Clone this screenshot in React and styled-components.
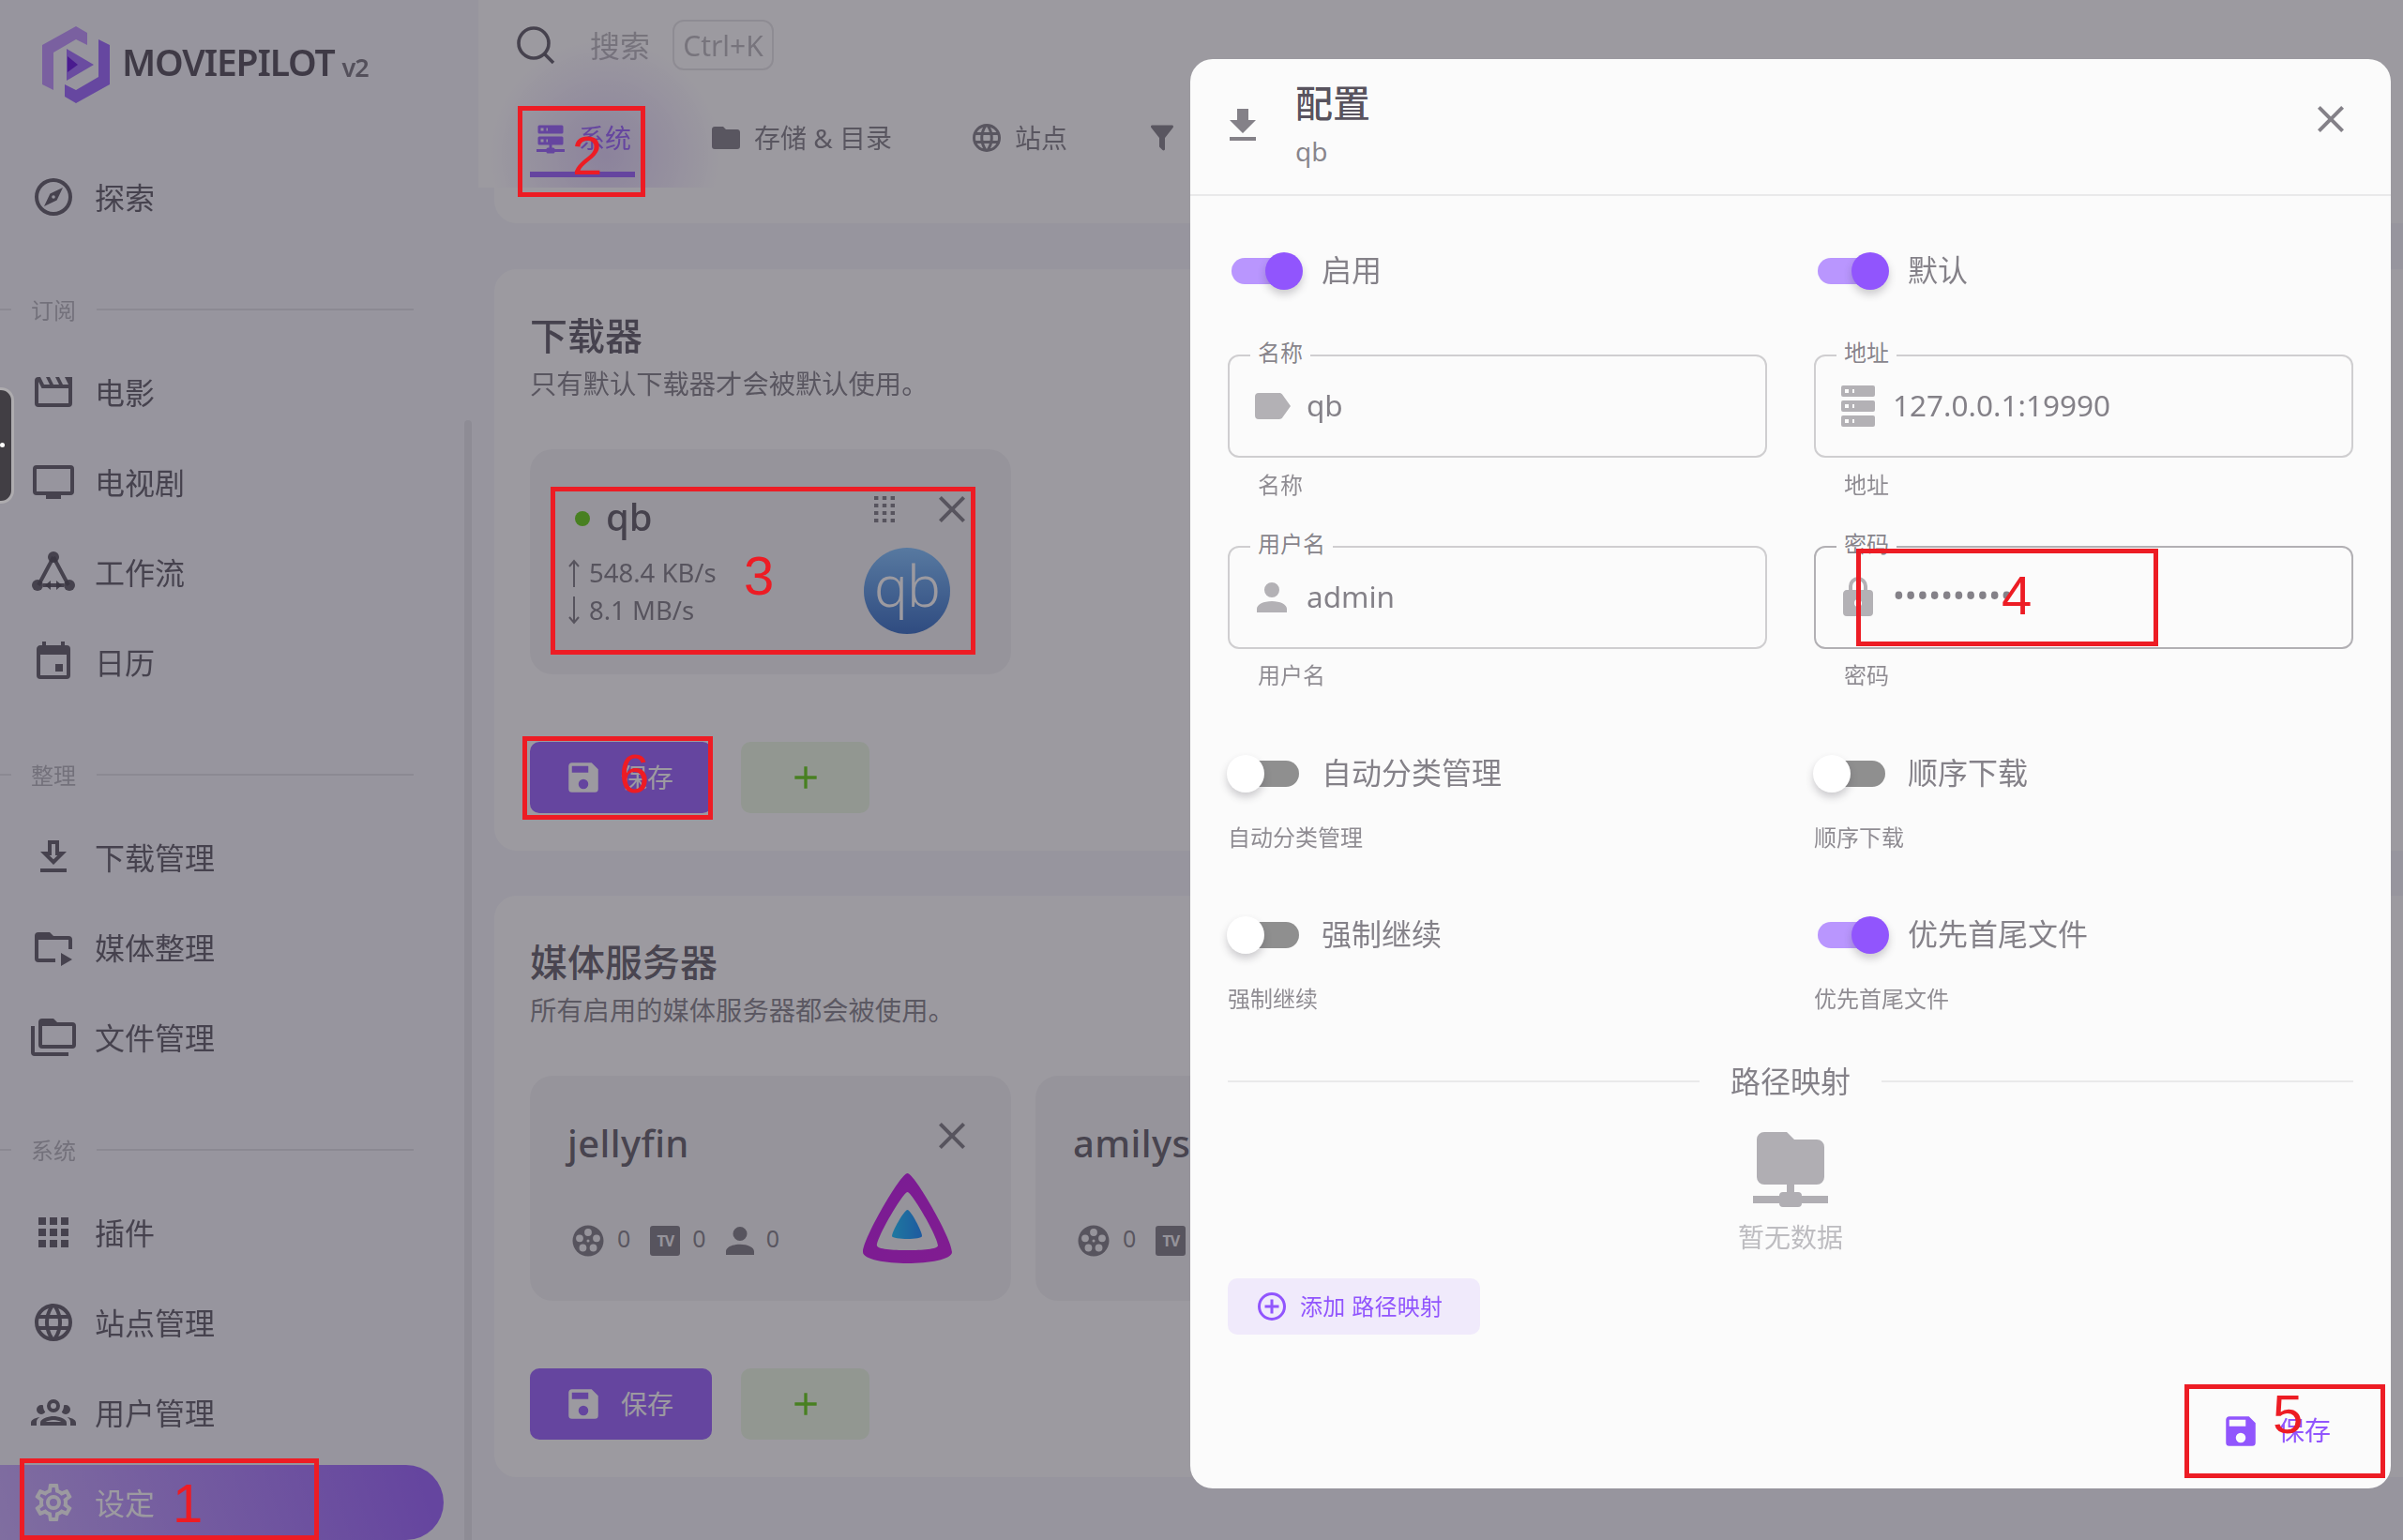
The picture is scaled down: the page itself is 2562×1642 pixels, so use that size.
import React from "react";
import styled, { createGlobalStyle } from "styled-components";

const FONT = `"Noto Sans", "Noto Sans CJK SC", sans-serif`;
const PRIMARY = "#9155fd";
const INK = "rgba(58,53,65,.87)";
const INK_MID = "rgba(58,53,65,.68)";
const INK_FAINT = "rgba(58,53,65,.38)";
const SOFT = "blur(0.55px)";

const Global = createGlobalStyle`
  html, body { margin: 0; padding: 0; background: #f4f5fa; }
  * { box-sizing: border-box; }
  body { font-family: ${FONT}; }
`;

const P = {
  compass: "M7,17L10.2,10.2L17,7L13.8,13.8L7,17M12,11.1A0.9,0.9 0 0,0 11.1,12A0.9,0.9 0 0,0 12,12.9A0.9,0.9 0 0,0 12.9,12A0.9,0.9 0 0,0 12,11.1M12,2A10,10 0 0,1 22,12A10,10 0 0,1 12,22A10,10 0 0,1 2,12A10,10 0 0,1 12,2M12,4A8,8 0 0,0 4,12A8,8 0 0,0 12,20A8,8 0 0,0 20,12A8,8 0 0,0 12,4Z",
  movie: "M5.76,10H20V18H4V6.47M22,4H18L20,8H17L15,4H13L15,8H12L10,4H8L10,8H7L5,4H4A2,2 0 0,0 2,6V18A2,2 0 0,0 4,20H20A2,2 0 0,0 22,18V4Z",
  tv: "M21,17H3V5H21M21,3H3A2,2 0 0,0 1,5V17A2,2 0 0,0 3,19H8V21H16V19H21A2,2 0 0,0 23,17V5A2,2 0 0,0 21,3Z",
  calendar: "M19,19H5V8H19M19,3H18V1H16V3H8V1H6V3H5C3.89,3 3,3.89 3,5V19A2,2 0 0,0 5,21H19A2,2 0 0,0 21,19V5A2,2 0 0,0 19,3M13,13H17V17H13",
  downloadOutline: "M13,5V11H14.17L12,13.17L9.83,11H11V5H13M15,3H9V9H5L12,16L19,9H15V3M19,18H5V20H19V18Z",
  download: "M5,20H19V18H5M19,9H15V3H9V9H5L12,16L19,9Z",
  folderPlay: "M22,13V8A2,2 0 0 0 20,6H12L10,4H4A2,2 0 0,0 2,6V18A2,2 0 0,0 4,20H13V18H4V8H20V13H22M16,15V22L22,18.5L16,15Z",
  folderMulti: "M22,4H14L12,2H6A2,2 0 0,0 4,4V16A2,2 0 0,0 6,18H22A2,2 0 0,0 24,16V6A2,2 0 0,0 22,4M2,6H0V20A2,2 0 0,0 2,22H20V20H2V6M22,16H6V6H22V16Z",
  apps: "M16,20H20V16H16M16,14H20V10H16M10,8H14V4H10M16,8H20V4H16M10,14H14V10H10M4,14H8V10H4M4,20H8V16H4M10,20H14V16H10M4,8H8V4H4V8Z",
  web: "M16.36,14C16.44,13.34 16.5,12.68 16.5,12C16.5,11.32 16.44,10.66 16.36,10H19.74C19.9,10.64 20,11.31 20,12C20,12.69 19.9,13.36 19.74,14M14.59,19.56C15.19,18.45 15.65,17.25 15.97,16H18.92C17.96,17.65 16.43,18.93 14.59,19.56M14.34,14H9.66C9.56,13.34 9.5,12.68 9.5,12C9.5,11.32 9.56,10.65 9.66,10H14.34C14.43,10.65 14.5,11.32 14.5,12C14.5,12.68 14.43,13.34 14.34,14M12,19.96C11.17,18.76 10.5,17.43 10.09,16H13.91C13.5,17.43 12.83,18.76 12,19.96M8,8H5.08C6.03,6.34 7.57,5.06 9.4,4.44C8.8,5.55 8.35,6.75 8,8M5.08,16H8C8.35,17.25 8.8,18.45 9.4,19.56C7.57,18.93 6.03,17.65 5.08,16M4.26,14C4.1,13.36 4,12.69 4,12C4,11.31 4.1,10.64 4.26,10H7.64C7.56,10.66 7.5,11.32 7.5,12C7.5,12.68 7.56,13.34 7.64,14M12,4.03C12.83,5.23 13.5,6.57 13.91,8H10.09C10.5,6.57 11.17,5.23 12,4.03M18.92,8H15.97C15.65,6.75 15.19,5.55 14.59,4.44C16.43,5.07 17.96,6.34 18.92,8M12,2C6.47,2 2,6.5 2,12A10,10 0 0,0 12,22A10,10 0 0,0 22,12A10,10 0 0,0 12,2Z",
  group: "M12,5A3.5,3.5 0 0,0 8.5,8.5A3.5,3.5 0 0,0 12,12A3.5,3.5 0 0,0 15.5,8.5A3.5,3.5 0 0,0 12,5M12,7A1.5,1.5 0 0,1 13.5,8.5A1.5,1.5 0 0,1 12,10A1.5,1.5 0 0,1 10.5,8.5A1.5,1.5 0 0,1 12,7M5.5,8A2.5,2.5 0 0,0 3,10.5C3,11.44 3.53,12.25 4.29,12.68C4.65,12.88 5.06,13 5.5,13C5.94,13 6.35,12.88 6.71,12.68C7.08,12.47 7.39,12.17 7.62,11.81C6.89,10.86 6.5,9.7 6.5,8.5C6.5,8.41 6.5,8.31 6.5,8.22C6.2,8.08 5.86,8 5.5,8M18.5,8C18.14,8 17.8,8.08 17.5,8.22C17.5,8.31 17.5,8.41 17.5,8.5C17.5,9.7 17.11,10.86 16.38,11.81C16.5,12 16.63,12.15 16.78,12.3C16.94,12.45 17.1,12.58 17.29,12.68C17.65,12.88 18.06,13 18.5,13C18.94,13 19.35,12.88 19.71,12.68C20.47,12.25 21,11.44 21,10.5A2.5,2.5 0 0,0 18.5,8M12,14C9.66,14 5,15.17 5,17.5V19H19V17.5C19,15.17 14.34,14 12,14M4.71,14.55C2.78,14.78 0,15.76 0,17.5V19H3V17.07C3,16.06 3.69,15.22 4.71,14.55M19.29,14.55C20.31,15.22 21,16.06 21,17.07V19H24V17.5C24,15.76 21.22,14.78 19.29,14.55M12,16C13.53,16 15.24,16.5 16.23,17H7.77C8.76,16.5 10.47,16 12,16Z",
  cog: "M12,8A4,4 0 0,1 16,12A4,4 0 0,1 12,16A4,4 0 0,1 8,12A4,4 0 0,1 12,8M12,10A2,2 0 0,0 10,12A2,2 0 0,0 12,14A2,2 0 0,0 14,12A2,2 0 0,0 12,10M10,22C9.75,22 9.54,21.82 9.5,21.58L9.13,18.93C8.5,18.68 7.96,18.34 7.44,17.94L4.95,18.95C4.73,19.03 4.46,18.95 4.34,18.73L2.34,15.27C2.21,15.05 2.27,14.78 2.46,14.63L4.57,12.97L4.5,12L4.57,11L2.46,9.37C2.27,9.22 2.21,8.95 2.34,8.73L4.34,5.27C4.46,5.05 4.73,4.96 4.95,5.05L7.44,6.05C7.96,5.66 8.5,5.32 9.13,5.07L9.5,2.42C9.54,2.18 9.75,2 10,2H14C14.25,2 14.46,2.18 14.5,2.42L14.87,5.07C15.5,5.32 16.04,5.66 16.56,6.05L19.05,5.05C19.27,4.96 19.54,5.05 19.66,5.27L21.66,8.73C21.79,8.95 21.73,9.22 21.54,9.37L19.43,11L19.5,12L19.43,13L21.54,14.63C21.73,14.78 21.79,15.05 21.66,15.27L19.66,18.73C19.54,18.95 19.27,19.04 19.05,18.95L16.56,17.95C16.04,18.34 15.5,18.68 14.87,18.93L14.5,21.58C14.46,21.82 14.25,22 14,22H10M11.25,4L10.88,6.61C9.68,6.86 8.62,7.5 7.85,8.39L5.44,7.35L4.69,8.65L6.8,10.2C6.4,11.37 6.4,12.64 6.8,13.8L4.68,15.36L5.43,16.66L7.86,15.62C8.63,16.5 9.68,17.14 10.87,17.38L11.24,20H12.76L13.13,17.39C14.32,17.14 15.37,16.5 16.14,15.62L18.57,16.66L19.32,15.36L17.2,13.81C17.6,12.64 17.6,11.37 17.2,10.2L19.31,8.65L18.56,7.35L16.15,8.39C15.38,7.5 14.32,6.86 13.13,6.62L12.75,4H11.25Z",
  serverNet: "M13,19H14A1,1 0 0,1 15,20H22V22H15A1,1 0 0,1 14,23H10A1,1 0 0,1 9,22H2V20H9A1,1 0 0,1 10,19H11V17H4A1,1 0 0,1 3,16V12A1,1 0 0,1 4,11H20A1,1 0 0,1 21,12V16A1,1 0 0,1 20,17H13V19M4,3H20A1,1 0 0,1 21,4V8A1,1 0 0,1 20,9H4A1,1 0 0,1 3,8V4A1,1 0 0,1 4,3M9,7H10V5H9V7M9,15H10V13H9V15M5,5V7H7V5H5M5,13V15H7V13H5Z",
  folder: "M10,4H4C2.89,4 2,4.89 2,6V18A2,2 0 0,0 4,20H20A2,2 0 0,0 22,18V8C22,6.89 21.1,6 20,6H12L10,4Z",
  filter: "M14,12V19.88C14.04,20.18 13.94,20.5 13.71,20.71C13.32,21.1 12.69,21.1 12.3,20.71L10.29,18.7C10.06,18.47 9.96,18.16 10,17.87V12H9.97L4.21,4.62C3.87,4.19 3.95,3.56 4.38,3.22C4.57,3.08 4.78,3 5,3V3H19V3C19.22,3 19.43,3.08 19.62,3.22C20.05,3.56 20.13,4.19 19.79,4.62L14.03,12H14Z",
  close: "M19,6.41L17.59,5L12,10.59L6.41,5L5,6.41L10.59,12L5,17.59L6.41,19L12,13.41L17.59,19L19,17.59L13.41,12L19,6.41Z",
  drag: "M7,19V17H9V19H7M11,19V17H13V19H11M15,19V17H17V19H15M7,15V13H9V15H7M11,15V13H13V15H11M15,15V13H17V15H15M7,11V9H9V11H7M11,11V9H13V11H11M15,11V9H17V11H15M7,7V5H9V7H7M11,7V5H13V7H11M15,7V5H17V7H15Z",
  save: "M15,9H5V5H15M12,19A3,3 0 0,1 9,16A3,3 0 0,1 12,13A3,3 0 0,1 15,16A3,3 0 0,1 12,19M17,3H5C3.89,3 3,3.9 3,5V19A2,2 0 0,0 5,21H19A2,2 0 0,0 21,19V7L17,3Z",
  plus: "M19,13H13V19H11V13H5V11H11V5H13V11H19V13Z",
  label: "M17.63,5.84C17.27,5.33 16.67,5 16,5H5A2,2 0 0,0 3,7V17A2,2 0 0,0 5,19H16C16.67,19 17.27,18.66 17.63,18.15L22,12L17.63,5.84Z",
  server: "M4,1H20A1,1 0 0,1 21,2V6A1,1 0 0,1 20,7H4A1,1 0 0,1 3,6V2A1,1 0 0,1 4,1M4,9H20A1,1 0 0,1 21,10V14A1,1 0 0,1 20,15H4A1,1 0 0,1 3,14V10A1,1 0 0,1 4,9M4,17H20A1,1 0 0,1 21,18V22A1,1 0 0,1 20,23H4A1,1 0 0,1 3,22V18A1,1 0 0,1 4,17M9,5H10V3H9V5M9,13H10V11H9V13M9,21H10V19H9V21M5,3V5H7V3H5M5,11V13H7V11H5M5,19V21H7V19H5Z",
  account: "M12,4A4,4 0 0,1 16,8A4,4 0 0,1 12,12A4,4 0 0,1 8,8A4,4 0 0,1 12,4M12,14C16.42,14 20,15.79 20,18V20H4V18C4,15.79 7.58,14 12,14Z",
  lock: "M12,17A2,2 0 0,0 14,15C14,13.89 13.1,13 12,13A2,2 0 0,0 10,15A2,2 0 0,0 12,17M18,8A2,2 0 0,1 20,10V20A2,2 0 0,1 18,22H6A2,2 0 0,1 4,20V10C4,8.89 4.9,8 6,8H7V6A5,5 0 0,1 12,1A5,5 0 0,1 17,6V8H18M12,3A3,3 0 0,0 9,6V8H15V6A3,3 0 0,0 12,3Z",
  plusCircle: "M12,20C7.59,20 4,16.41 4,12C4,7.59 7.59,4 12,4C16.41,4 20,7.59 20,12C20,16.41 16.41,20 12,20M12,2A10,10 0 0,0 2,12A10,10 0 0,0 12,22A10,10 0 0,0 22,12A10,10 0 0,0 12,2M13,7H11V11H7V13H11V17H13V13H17V11H13V7Z",
  folderNet: "M3,15V5A2,2 0 0,1 5,3H11L13,5H19A2,2 0 0,1 21,7V15A2,2 0 0,1 19,17H13V19H14A1,1 0 0,1 15,20H22V22H15A1,1 0 0,1 14,23H10A1,1 0 0,1 9,22H2V20H9A1,1 0 0,1 10,19H11V17H5A2,2 0 0,1 3,15Z",
  film: "M12,1A11,11 0 1,0 12,23A11,11 0 1,0 12,1ZM12,3.4A2.6,2.6 0 1,1 12,8.6A2.6,2.6 0 1,1 12,3.4ZM18,7.6A2.6,2.6 0 1,1 18,12.8A2.6,2.6 0 1,1 18,7.6ZM15.7,14.4A2.6,2.6 0 1,1 15.7,19.6A2.6,2.6 0 1,1 15.7,14.4ZM8.3,14.4A2.6,2.6 0 1,1 8.3,19.6A2.6,2.6 0 1,1 8.3,14.4ZM6,7.6A2.6,2.6 0 1,1 6,12.8A2.6,2.6 0 1,1 6,7.6ZM12,11A1,1 0 1,0 12,13A1,1 0 1,0 12,11Z",
};

const IconSvg = styled.svg`
  display: block;
  flex: none;
  width: ${(p) => p.$w}px;
  height: ${(p) => p.$h}px;
  fill: currentColor;
  color: ${(p) => p.$color || "inherit"};
`;
const Icon = ({ d, size = 48, h, vb = "0 0 24 24", color, ...rest }) => (
  <IconSvg viewBox={vb} $w={size} $h={h || size} $color={color} preserveAspectRatio="none" {...rest}>
    <path d={d} fillRule="evenodd" />
  </IconSvg>
);

/* text that sits a little above the centre of its flex line */
const Lbl = styled.span`
  margin-bottom: ${(p) => p.$up * 2}px;
`;

const Page = styled.div`
  position: relative;
  width: 2562px;
  height: 1642px;
  overflow: hidden;
  display: flex;
  background: #f4f5fa;
  color: ${INK};
  font-family: ${FONT};
`;

/* ---------- sidebar ---------- */
const Sidebar = styled.aside`
  position: relative;
  width: 510px;
  flex: none;
  display: flex;
  flex-direction: column;
  filter: ${SOFT};
`;
const Brand = styled.div`
  height: 138px;
  flex: none;
  display: flex;
  align-items: center;
  padding-left: 45px;
  margin-bottom: 32px;
  gap: 13px;
`;
const BrandName = styled.span`
  font-size: 39px;
  font-weight: 600;
  letter-spacing: -1.15px;
  color: rgba(58, 53, 65, 0.95);
  line-height: 1;
`;
const BrandVer = styled.span`
  font-size: 27px;
  font-weight: 600;
  letter-spacing: -1px;
  margin-left: 8px;
  color: rgba(58, 53, 65, 0.72);
  position: relative;
  top: 1px;
`;
const BrandText = styled.div`
  display: flex;
  align-items: baseline;
  margin-bottom: 3px;
`;
const NavItem = styled.div`
  height: 80px;
  flex: none;
  width: 473px;
  margin-bottom: 16px;
  display: flex;
  align-items: center;
  padding-left: 33px;
  gap: 20px;
  font-size: 32px;
  border-radius: 0 40px 40px 0;
  color: ${(p) => (p.$active ? "#fff" : INK)};
  background: ${(p) => (p.$active ? "linear-gradient(72deg, #c6a7fe, #9155fd 94%)" : "none")};
`;
const NavSection = styled.div`
  height: 48px;
  flex: none;
  margin: 40px 0 24px;
  display: flex;
  align-items: center;
  font-size: 24px;
  color: ${INK_FAINT};
`;
const NavRuleShort = styled.i`
  width: 12px;
  height: 2px;
  margin-right: 21px;
  background: rgba(58, 53, 65, 0.12);
`;
const NavRuleLong = styled.i`
  width: 338px;
  height: 2px;
  margin-left: 22px;
  background: rgba(58, 53, 65, 0.12);
`;
const SideScroll = styled.div`
  position: absolute;
  left: 495px;
  top: 448px;
  bottom: 0;
  width: 8px;
  background: rgba(58, 53, 65, 0.09);
  border-radius: 4px 4px 0 0;
`;

/* ---------- main ---------- */
const Main = styled.main`
  flex: 1;
  min-width: 0;
  display: flex;
  flex-direction: column;
  filter: ${SOFT};
`;
const TopBar = styled.header`
  height: 200px;
  flex: none;
  background:
    radial-gradient(circle at 135px 165px, rgba(135, 85, 225, 0.28), rgba(135, 85, 225, 0) 125px),
    rgba(255, 255, 255, 0.94);
  display: flex;
  flex-direction: column;
`;
const SearchRow = styled.div`
  height: 96px;
  flex: none;
  padding-left: 39px;
  display: flex;
  align-items: center;
`;
const SearchLabel = styled.span`
  margin: 0 0 3px 36px;
  font-size: 32px;
  color: ${INK_FAINT};
`;
const Kbd = styled.span`
  margin-left: 24px;
  height: 54px;
  width: 108px;
  border: 2px solid rgba(58, 53, 65, 0.14);
  border-radius: 12px;
  display: flex;
  align-items: center;
  justify-content: center;
  font-size: 30px;
  color: ${INK_FAINT};
`;
const Tabs = styled.nav`
  display: flex;
  padding-left: 55px;
  gap: 75px;
  align-items: flex-start;
`;
const Tab = styled.div`
  height: 93px;
  padding: 15px 4px 0;
  display: flex;
  align-items: center;
  gap: 12px;
  font-size: 28px;
  white-space: nowrap;
  color: ${(p) => (p.$active ? PRIMARY : INK_MID)};
  border-bottom: 6px solid ${(p) => (p.$active ? PRIMARY : "transparent")};
`;
const TabsFoot = styled.div`
  height: 38px;
  flex: none;
  margin-left: 17px;
  background: rgba(255, 255, 255, 0.9);
  border-radius: 0 0 0 24px;
`;
const Section = styled.section`
  margin: ${(p) => p.$mt}px 0 0 17px;
  height: 620px;
  flex: none;
  background: #fff;
  border-radius: 24px 0 0 24px;
  padding: 47px 0 40px 38px;
  display: flex;
  flex-direction: column;
`;
const SectionTitle = styled.h2`
  margin: 0;
  height: 48px;
  line-height: 48px;
  font-size: 40px;
  font-weight: 500;
  color: ${INK};
`;
const SectionSub = styled.p`
  margin: 9px 0 0;
  height: 36px;
  line-height: 36px;
  font-size: 28.3px;
  color: ${INK_MID};
`;
const Devices = styled.div`
  margin-top: 52px;
  display: flex;
  gap: 26px;
`;
const Device = styled.article`
  position: relative;
  flex: none;
  width: 513px;
  height: 240px;
  padding: 42px 40px 0;
  border-radius: 24px;
  background: rgba(58, 53, 65, 0.06);
`;
const DeviceHead = styled.div`
  height: 64px;
  display: flex;
  align-items: center;
`;
const StatusDot = styled.i`
  width: 16px;
  height: 16px;
  margin: 0 17px 0 8px;
  border-radius: 50%;
  background: #56ca00;
`;
const DeviceName = styled.span`
  font-size: 40px;
  font-weight: 500;
  letter-spacing: ${(p) => p.$ls || 0}px;
  margin-bottom: 6px;
  color: ${INK};
`;
const DeviceActions = styled.div`
  position: absolute;
  top: 50px;
  right: 49px;
  display: flex;
  gap: 47px;
  color: ${INK_MID};
`;
const DeviceBody = styled.div`
  display: flex;
  justify-content: space-between;
  padding-right: 25px;
`;
const SpeedList = styled.div`
  padding-top: 6px;
`;
const Speed = styled.div`
  height: 40px;
  display: flex;
  align-items: center;
  gap: 9px;
  font-size: 27.5px;
  color: ${INK_MID};
`;
const ArrowSvg = styled.svg`
  width: 14px;
  height: 30px;
  fill: none;
  stroke: currentColor;
  stroke-width: 2;
`;
const QbLogo = styled.div`
  width: 92px;
  height: 92px;
  margin-top: -1px;
  border-radius: 50%;
  background: linear-gradient(180deg, #76bdff, #2461bf);
  color: #fff;
  font-size: 60px;
  font-weight: 300;
  letter-spacing: -1px;
  line-height: 80px;
  text-align: center;
`;
const LibStats = styled.div`
  display: flex;
  align-items: center;
  padding: 43px 0 0 4px;
  height: 96px;
  align-self: flex-start;
  color: ${INK_MID};
`;
const LibCount = styled.span`
  font-size: 25px;
  margin: -6px 21px 0 13px;
  line-height: 36px;
`;
const TvBadge = styled.span`
  width: 32px;
  height: 32px;
  border-radius: 3px;
  background: ${INK_MID};
  color: #f1f0f2;
  font-size: 16px;
  font-weight: 700;
  display: flex;
  align-items: center;
  justify-content: center;
  letter-spacing: -1px;
`;
const JellySvg = styled.svg`
  width: 95px;
  height: 96px;
  margin: -2px -2px 0 0;
  flex: none;
`;
const ActionRow = styled.div`
  margin-top: 72px;
  display: flex;
  gap: 31px;
`;
const SaveBtn = styled.button`
  width: 194px;
  height: 76px;
  border: 0;
  border-radius: 10px;
  background: ${PRIMARY};
  color: #fff;
  font: 28px ${FONT};
  display: flex;
  align-items: center;
  padding-left: 36px;
  gap: 19px;
`;
const AddBtn = styled.button`
  width: 137px;
  height: 76px;
  border: 0;
  border-radius: 10px;
  background: rgba(86, 202, 0, 0.12);
  color: #56ca00;
  display: flex;
  align-items: center;
  justify-content: center;
`;

/* ---------- overlays ---------- */
const Scrim = styled.div`
  position: absolute;
  inset: 0;
  background: rgba(58, 53, 65, 0.5);
`;
const Handle = styled.div`
  position: absolute;
  left: -4px;
  top: 413px;
  width: 19px;
  height: 124px;
  background: #413e44;
  border: 3px solid #aeacaf;
  border-radius: 0 14px 14px 0;
  &::after {
    content: "";
    position: absolute;
    left: 1px;
    top: 56px;
    width: 5px;
    height: 5px;
    border-radius: 50%;
    background: #fff;
  }
`;
const Modal = styled.div`
  position: absolute;
  left: 1269px;
  top: 63px;
  width: 1280px;
  height: 1524px;
  border-radius: 24px;
  background: #fbfbfb;
  display: flex;
  flex-direction: column;
  color: rgba(58, 53, 65, 0.62);
  filter: ${SOFT};
`;
const ModalHead = styled.div`
  height: 146px;
  flex: none;
  border-bottom: 2px solid #e9e9ea;
  padding: 0 40px 3px 32px;
  display: flex;
  align-items: center;
  gap: 32px;
`;
const ModalTitles = styled.div`
  flex: 1;
  display: flex;
  flex-direction: column;
  padding-bottom: 3px;
`;
const ModalTitle = styled.div`
  height: 48px;
  line-height: 48px;
  font-size: 40px;
  font-weight: 500;
  color: ${INK};
`;
const ModalSub = styled.div`
  height: 36px;
  margin-top: 9px;
  line-height: 36px;
  font-size: 28px;
  color: rgba(58, 53, 65, 0.6);
`;
const CloseWrap = styled.div`
  margin-top: -14px;
  color: rgba(58, 53, 65, 0.62);
`;
const ModalBody = styled.div`
  padding: 0 40px;
  flex: 1;
  display: flex;
  flex-direction: column;
`;
const Row = styled.div`
  margin-top: ${(p) => p.$mt}px;
  display: grid;
  grid-template-columns: 575px 575px;
  column-gap: 50px;
`;
const SwitchLine = styled.div`
  height: 40px;
  display: flex;
  align-items: center;
  padding-left: 4px;
  gap: 24px;
  font-size: 32px;
`;
const Track = styled.span`
  position: relative;
  flex: none;
  width: 72px;
  height: 28px;
  border-radius: 14px;
  background: ${(p) => (p.$on ? "#b996fe" : "#8f8f8f")};
`;
const Thumb = styled.i`
  position: absolute;
  top: -6px;
  left: ${(p) => (p.$on ? "36px" : "-5px")};
  width: 40px;
  height: 40px;
  border-radius: 50%;
  background: ${(p) => (p.$on ? PRIMARY : "#fff")};
  box-shadow: 0 5px 9px rgba(58, 53, 65, 0.24);
`;
const Hint = styled.div`
  height: 36px;
  line-height: 36px;
  font-size: 24px;
  color: rgba(58, 53, 65, 0.56);
  margin-top: ${(p) => p.$mt}px;
  padding-left: ${(p) => p.$pl || 0}px;
`;
const Field = styled.div`
  position: relative;
  height: 110px;
  border: 2px solid ${(p) => (p.$strong ? "#b2b0b4" : "#cfced0")};
  border-radius: 12px;
  display: flex;
  align-items: center;
  padding-left: 21px;
  gap: 13px;
  font-size: 31.5px;
`;
const FieldIcon = styled.span`
  color: #b3b1b5;
`;
const Legend = styled.span`
  position: absolute;
  top: -22px;
  left: 22px;
  height: 36px;
  line-height: 36px;
  padding: 0 8px;
  background: #fbfbfb;
  font-size: 24px;
`;
const Dots = styled.span`
  font-size: 34px;
  margin-bottom: 6px;
`;
const Divider = styled.div`
  margin-top: 46px;
  height: 48px;
  display: flex;
  align-items: center;
  gap: 33px;
  font-size: 32px;
  &::before, &::after {
    content: "";
    flex: 1;
    height: 2px;
    background: #e9e9ea;
  }
`;
const Empty = styled.div`
  margin-top: 18px;
  display: flex;
  flex-direction: column;
  align-items: center;
  color: #b0aeb3;
`;
const EmptyText = styled.div`
  margin-top: 10px;
  height: 36px;
  line-height: 36px;
  font-size: 28px;
  color: #bdbcc0;
`;
const AddMapping = styled.button`
  margin-top: 26px;
  align-self: flex-start;
  width: 269px;
  height: 60px;
  border: 0;
  border-radius: 10px;
  background: rgba(145, 85, 253, 0.1);
  color: ${PRIMARY};
  font: 24px ${FONT};
  letter-spacing: 0.3px;
  display: flex;
  align-items: center;
  padding-left: 29px;
  gap: 12px;
`;
const ModalFoot = styled.div`
  height: 99px;
  flex: none;
  padding: 0 64px 23px 0;
  display: flex;
  justify-content: flex-end;
  align-items: center;
  gap: 19px;
  color: ${PRIMARY};
  font-size: 28px;
`;
const Marker = styled.div`
  position: absolute;
  left: ${(p) => p.$x}px;
  top: ${(p) => p.$y}px;
  width: ${(p) => p.$w}px;
  height: ${(p) => p.$h}px;
  border: 5px solid #ed1c24;
`;
const Digit = styled.div`
  position: absolute;
  left: ${(p) => p.$x}px;
  top: ${(p) => p.$y}px;
  font: 58px/1 "Liberation Sans", sans-serif;
  color: #ed1c24;
`;

/* ---------- drawings ---------- */
const Logo = () => (
  <svg width="72" height="82" viewBox="0 0 72 82" style={{ flex: "none" }}>
    <path d="M0 20L36 0L48 7V20L36 14L12 28V68L0 62Z" fill="#ba8bff" />
    <path d="M60 14L72 20V62L36 82L24 75V62L36 68L60 54Z" fill="#9259ff" />
    <path d="M26 24L55 41L26 58Z" fill="#9a63ff" />
    <path d="M27 32L38 41L27 49Z" fill="#5a00dd" />
  </svg>
);
const Search = () => (
  <svg width="44" height="44" viewBox="0 0 44 44" fill="none" stroke="currentColor" strokeWidth="3.6" style={{ flex: "none" }}>
    <circle cx="20" cy="20" r="16" />
    <path d="M32 32L41 41" />
  </svg>
);
const Flow = () => (
  <IconSvg viewBox="0 0 48 48" $w={48} $h={48}>
    <circle cx="24" cy="8" r="6" />
    <circle cx="7" cy="38" r="6" />
    <circle cx="41" cy="38" r="6" />
    <path d="M24 8L8 38M24 8L40 38M13 38H35" stroke="currentColor" strokeWidth="4" fill="none" />
    <path d="M15 38l6-5v10zM33 38l-6-5v10z" />
  </IconSvg>
);
const Jelly = () => (
  <JellySvg viewBox="0 0 95 96">
    <defs>
      <linearGradient id="jf" x1="0" y1="0" x2="1" y2="1">
        <stop offset="0" stopColor="#b902e6" />
        <stop offset="1" stopColor="#c803e0" />
      </linearGradient>
      <linearGradient id="jb" x1="0" y1="0" x2="1" y2="0">
        <stop offset="0" stopColor="#02bbff" />
        <stop offset="1" stopColor="#027fff" />
      </linearGradient>
    </defs>
    <path fill="url(#jf)" fillRule="evenodd" d="M47.5 0C40 0 0 70 0 84C0 92 25 96 47.5 96C70 96 95 92 95 84C95 70 55 0 47.5 0ZM47.5 20C43 20 15 68 15 77C15 81 32 82 47.5 82C63 82 80 81 80 77C80 68 52 20 47.5 20Z" />
    <path fill="url(#jb)" d="M47.5 39C44 39 31 62 31 67C31 69 40 70 47.5 70C55 70 63 69 63 67C63 62 51 39 47.5 39Z" />
  </JellySvg>
);
const Arrow = ({ up }) => (
  <ArrowSvg viewBox="0 0 14 30">
    {up ? <path d="M7 30V2M2 8L7 2L12 8" /> : <path d="M7 0V28M2 22L7 28L12 22" />}
  </ArrowSvg>
);

const NAV = [
  { t: "探索", d: P.compass },
  { s: "订阅" },
  { t: "电影", d: P.movie },
  { t: "电视剧", d: P.tv },
  { t: "工作流", flow: true },
  { t: "日历", d: P.calendar },
  { s: "整理" },
  { t: "下载管理", d: P.downloadOutline },
  { t: "媒体整理", d: P.folderPlay },
  { t: "文件管理", d: P.folderMulti },
  { s: "系统" },
  { t: "插件", d: P.apps },
  { t: "站点管理", d: P.web },
  { t: "用户管理", d: P.group },
  { t: "设定", d: P.cog, active: true },
];

const TABS = [
  { t: "系统", d: P.serverNet, active: true },
  { t: "存储 & 目录", d: P.folder },
  { t: "站点", d: P.web },
  { t: "规则", d: P.filter },
];

const MARKERS = [
  [21, 1555, 319, 87], [552, 113, 136, 97], [587, 519, 453, 179],
  [1979, 585, 322, 104], [2329, 1476, 214, 100], [557, 785, 203, 89],
];
const DIGITS = [
  ["1", 184, 1574], ["2", 610, 137], ["3", 793, 585],
  ["4", 2134, 606], ["5", 2423, 1479], ["6", 660, 796],
];

const SwitchCtl = ({ on, children }) => (
  <SwitchLine>
    <Track $on={on}><Thumb $on={on} /></Track>
    <Lbl $up={3}>{children}</Lbl>
  </SwitchLine>
);

const Buttons = () => (
  <ActionRow>
    <SaveBtn><Icon d={P.save} size={42} /><Lbl $up={1}>保存</Lbl></SaveBtn>
    <AddBtn><Icon d={P.plus} size={40} /></AddBtn>
  </ActionRow>
);

const LibCounts = () => (
  <LibStats>
    <Icon d={P.film} size={36} />
    <LibCount>0</LibCount>
    <TvBadge>TV</TvBadge>
    <LibCount>0</LibCount>
    <Icon d={P.account} size={30} h={30} vb="4 4 16 16" />
    <LibCount>0</LibCount>
  </LibStats>
);

export default function App() {
  return (
    <Page>
      <Global />
      <Sidebar>
        <Brand>
          <Logo />
          <BrandText>
            <BrandName>MOVIEPILOT</BrandName>
            <BrandVer>v2</BrandVer>
          </BrandText>
        </Brand>
        {NAV.map((n) =>
          n.s ? (
            <NavSection key={n.s}>
              <NavRuleShort />
              <Lbl $up={1}>{n.s}</Lbl>
              <NavRuleLong />
            </NavSection>
          ) : (
            <NavItem key={n.t} $active={n.active}>
              {n.flow ? <Flow /> : <Icon d={n.d} />}
              <Lbl $up={1.5}>{n.t}</Lbl>
            </NavItem>
          )
        )}
        <SideScroll />
      </Sidebar>

      <Main>
        <TopBar>
          <SearchRow>
            <Search />
            <SearchLabel>搜索</SearchLabel>
            <Kbd>Ctrl+K</Kbd>
          </SearchRow>
          <Tabs>
            {TABS.map((t) => (
              <Tab key={t.t} $active={t.active}>
                <Icon d={t.d} size={36} />
                <Lbl $up={1.5}>{t.t}</Lbl>
              </Tab>
            ))}
          </Tabs>
        </TopBar>
        <TabsFoot />

        <Section $mt={49}>
          <SectionTitle>下载器</SectionTitle>
          <SectionSub>只有默认下载器才会被默认使用。</SectionSub>
          <Devices>
            <Device>
              <DeviceHead>
                <StatusDot />
                <DeviceName>qb</DeviceName>
              </DeviceHead>
              <DeviceActions>
                <Icon d={P.drag} size={22} h={28} vb="7 5 10 14" />
                <Icon d={P.close} size={28} vb="5 5 14 14" />
              </DeviceActions>
              <DeviceBody>
                <SpeedList>
                  <Speed><Arrow up /><Lbl $up={1}>548.4 KB/s</Lbl></Speed>
                  <Speed><Arrow /><Lbl $up={1}>8.1 MB/s</Lbl></Speed>
                </SpeedList>
                <QbLogo>qb</QbLogo>
              </DeviceBody>
            </Device>
          </Devices>
          <Buttons />
        </Section>

        <Section $mt={48}>
          <SectionTitle>媒体服务器</SectionTitle>
          <SectionSub>所有启用的媒体服务器都会被使用。</SectionSub>
          <Devices>
            <Device>
              <DeviceHead>
                <DeviceName $ls={0.4}>jellyfin</DeviceName>
              </DeviceHead>
              <DeviceActions>
                <Icon d={P.close} size={28} vb="5 5 14 14" />
              </DeviceActions>
              <DeviceBody>
                <LibCounts />
                <Jelly />
              </DeviceBody>
            </Device>
            <Device>
              <DeviceHead>
                <DeviceName $ls={0.4}>amilys</DeviceName>
              </DeviceHead>
              <DeviceBody>
                <LibCounts />
              </DeviceBody>
            </Device>
          </Devices>
          <Buttons />
        </Section>
      </Main>

      <Scrim />
      <Handle />

      <Modal>
        <ModalHead>
          <Icon d={P.download} color="rgba(58,53,65,.62)" />
          <ModalTitles>
            <ModalTitle>配置</ModalTitle>
            <ModalSub>qb</ModalSub>
          </ModalTitles>
          <CloseWrap><Icon d={P.close} /></CloseWrap>
        </ModalHead>
        <ModalBody>
          <Row $mt={60}>
            <SwitchCtl on>启用</SwitchCtl>
            <SwitchCtl on>默认</SwitchCtl>
          </Row>
          <Row $mt={69}>
            <div>
              <Field>
                <Legend>名称</Legend>
                <FieldIcon><Icon d={P.label} /></FieldIcon>
                <Lbl $up={2}>qb</Lbl>
              </Field>
              <Hint $mt={11} $pl={32}>名称</Hint>
            </div>
            <div>
              <Field>
                <Legend>地址</Legend>
                <FieldIcon><Icon d={P.server} /></FieldIcon>
                <Lbl $up={2}>127.0.0.1:19990</Lbl>
              </Field>
              <Hint $mt={11} $pl={32}>地址</Hint>
            </div>
          </Row>
          <Row $mt={47}>
            <div>
              <Field>
                <Legend>用户名</Legend>
                <FieldIcon><Icon d={P.account} /></FieldIcon>
                <Lbl $up={2}>admin</Lbl>
              </Field>
              <Hint $mt={10} $pl={32}>用户名</Hint>
            </div>
            <div>
              <Field $strong>
                <Legend>密码</Legend>
                <FieldIcon><Icon d={P.lock} /></FieldIcon>
                <Dots>••••••••••</Dots>
              </Field>
              <Hint $mt={10} $pl={32}>密码</Hint>
            </div>
          </Row>
          <Row $mt={67}>
            <SwitchCtl>自动分类管理</SwitchCtl>
            <SwitchCtl>顺序下载</SwitchCtl>
          </Row>
          <Row $mt={0}>
            <Hint $mt={30}>自动分类管理</Hint>
            <Hint $mt={30}>顺序下载</Hint>
          </Row>
          <Row $mt={66}>
            <SwitchCtl>强制继续</SwitchCtl>
            <SwitchCtl on>优先首尾文件</SwitchCtl>
          </Row>
          <Row $mt={0}>
            <Hint $mt={30}>强制继续</Hint>
            <Hint $mt={30}>优先首尾文件</Hint>
          </Row>
          <Divider><Lbl $up={2}>路径映射</Lbl></Divider>
          <Empty>
            <Icon d={P.folderNet} size={96} />
            <EmptyText>暂无数据</EmptyText>
          </Empty>
          <AddMapping><Icon d={P.plusCircle} size={36} /><Lbl $up={2}>添加 路径映射</Lbl></AddMapping>
        </ModalBody>
        <ModalFoot>
          <Icon d={P.save} size={42} />
          <Lbl $up={2}>保存</Lbl>
        </ModalFoot>
      </Modal>

      {MARKERS.map(([x, y, w, h]) => (
        <Marker key={`${x}-${y}`} $x={x} $y={y} $w={w} $h={h} />
      ))}
      {DIGITS.map(([c, x, y]) => (
        <Digit key={c} $x={x} $y={y}>{c}</Digit>
      ))}
    </Page>
  );
}
